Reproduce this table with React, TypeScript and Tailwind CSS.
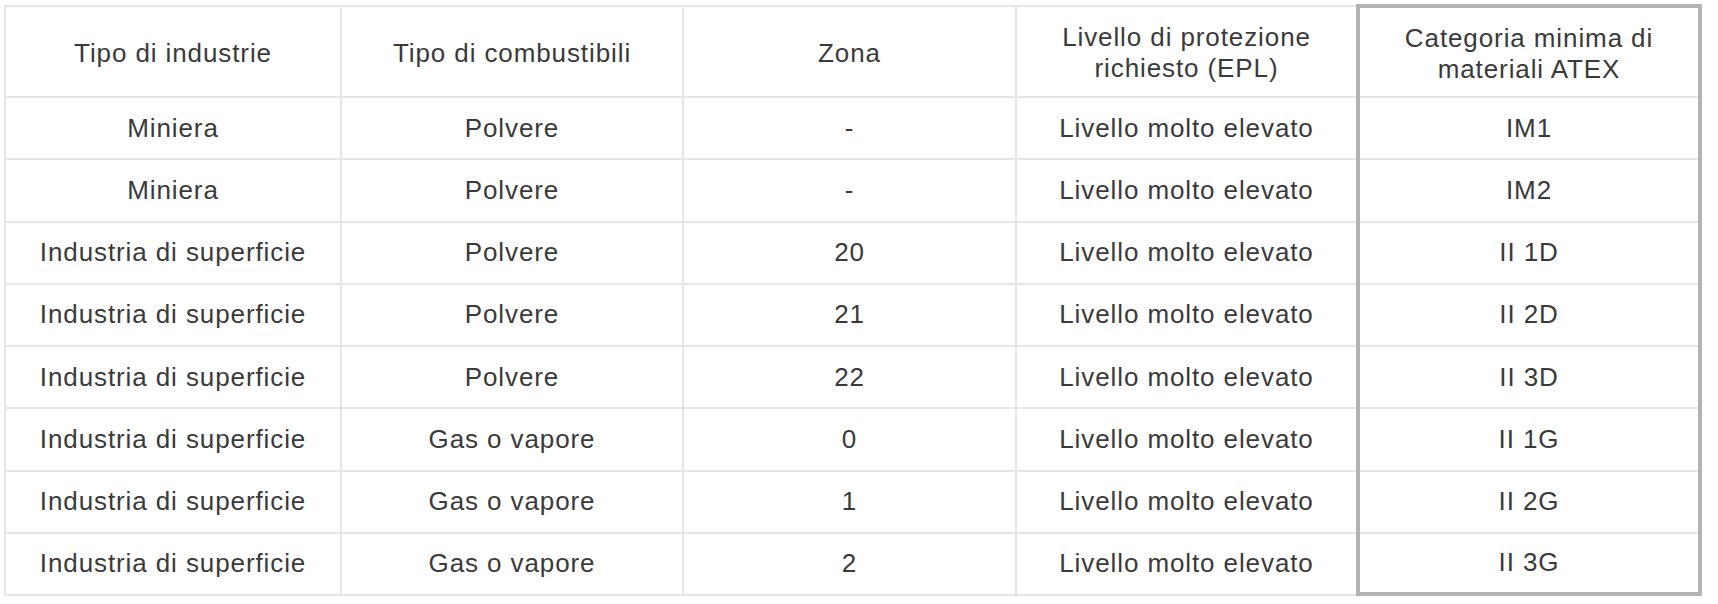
import React from "react";

const header = [
  "Tipo di industrie",
  "Tipo di combustibili",
  "Zona",
  "Livello di protezione richiesto (EPL)",
];

const rows: [string, string, string, string, string][] = [
  ["Miniera", "Polvere", "-", "Livello molto elevato", "IM1"],
  ["Miniera", "Polvere", "-", "Livello molto elevato", "IM2"],
  ["Industria di superficie", "Polvere", "20", "Livello molto elevato", "II 1D"],
  ["Industria di superficie", "Polvere", "21", "Livello molto elevato", "II 2D"],
  ["Industria di superficie", "Polvere", "22", "Livello molto elevato", "II 3D"],
  ["Industria di superficie", "Gas o vapore", "0", "Livello molto elevato", "II 1G"],
  ["Industria di superficie", "Gas o vapore", "1", "Livello molto elevato", "II 2G"],
  ["Industria di superficie", "Gas o vapore", "2", "Livello molto elevato", "II 3G"],
];

const widths = ["w-[336px]", "w-[342px]", "w-[333px]", "w-[339px]"];

export default function App() {
  return (
    <div
      className="w-[1718px] h-[604px] bg-white pt-[5px] pl-[4px] text-[#3a3a3a] text-[26px] tracking-[0.9px]"
      style={{ fontFamily: '"Liberation Sans", Arial, sans-serif' }}
    >
      <div className="flex items-start">
        {/* Left four columns */}
        <div className="flex flex-col border-l-2 border-t-2 border-[#e6e6e6]">
          <div className="flex h-[91px] border-b-2 border-[#e6e6e6]">
            {header.map((h, i) => (
              <div
                key={i}
                className={`${widths[i]} ${
                  i < 3 ? "border-r-2 border-[#e6e6e6]" : ""
                } flex items-center justify-center text-center leading-[31px] pt-[3px] px-[30px]`}
              >
                {h}
              </div>
            ))}
          </div>
          {rows.map((r, ri) => (
            <div
              key={ri}
              className="flex h-[62.25px] border-b-2 border-[#e6e6e6]"
            >
              {r.slice(0, 4).map((c, ci) => (
                <div
                  key={ci}
                  className={`${widths[ci]} ${
                    ci < 3 ? "border-r-2 border-[#e6e6e6]" : ""
                  } flex items-center justify-center text-center`}
                >
                  {c}
                </div>
              ))}
            </div>
          ))}
        </div>
        {/* Highlighted column */}
        <div className="-mt-px w-[346px] h-[592px] border-4 border-[#b3b3b3] flex flex-col">
          <div className="h-[90px] shrink-0 border-b-2 border-[#e6e6e6] flex items-center justify-center text-center leading-[31px] pt-[3px] px-[30px]">
            Categoria minima di materiali ATEX
          </div>
          {rows.map((r, ri) => (
            <div
              key={ri}
              className={`${
                ri < rows.length - 1
                  ? "h-[62.25px] border-b-2 border-[#e6e6e6]"
                  : "flex-1"
              } flex items-center justify-center text-center`}
            >
              {r[4]}
            </div>
          ))}
        </div>
      </div>
    </div>
  );
}
